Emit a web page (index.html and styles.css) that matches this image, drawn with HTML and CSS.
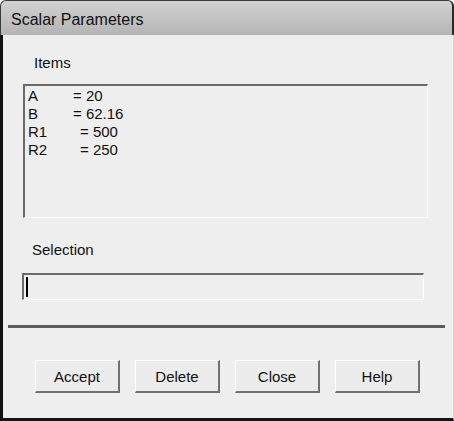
FILE: index.html
```html
<!DOCTYPE html>
<html lang="en">
<head>
	<meta charset="UTF-8">
	<meta name="viewport" content="width=device-width, initial-scale=1.0">
	<title>Scalar Parameters</title>
	<link rel="stylesheet" href="styles.css">
</head>
<body>

<div class="dialog">
	<div class="titlebar">Scalar Parameters</div>
	<div class="client">
		<div class="label items-label">Items</div>
		<div class="listbox">
			<div class="row"><span class="key">A</span>= 20</div>
			<div class="row"><span class="key">B</span>= 62.16</div>
			<div class="row"><span class="key wide">R1</span>= 500</div>
			<div class="row"><span class="key wide">R2</span>= 250</div>
		</div>
		<div class="label sel-label">Selection</div>
		<div class="textbox"><span class="caret"></span></div>
		<div class="separator"></div>
		<div class="buttons">
			<button>Accept</button>
			<button>Delete</button>
			<button>Close</button>
			<button>Help</button>
		</div>
	</div>
</div>

</body>
</html>
```

FILE: styles.css
```css
body {
	margin: 0;
	background: #ffffff;
	font-family: "Liberation Sans", Arial, sans-serif;
	color: #111;
}
.dialog {
	width: 454px;
	height: 421px;
	display: flex;
	flex-direction: column;
}
.titlebar {
	height: 35px;
	box-sizing: border-box;
	padding-left: 10px;
	line-height: 38px;
	font-size: 16px;
	background: linear-gradient(#d2d2d2, #b4b4b4);
	border: 1px solid #3a3a3a;
	border-bottom: none;
	border-right: 2px solid #2a2a2a;
	border-radius: 6px 6px 0 0;
}
.client {
	flex: 1;
	display: flex;
	flex-direction: column;
	background: #eeeeee;
	border-left: 3px solid #111;
	border-bottom: 3px solid #151515;
	border-right: 1px solid #d4d4d4;
	padding-top: 19px;
	font-size: 15px;
}
.label {
	line-height: 17px;
	height: 17px;
}
.items-label {
	margin-left: 31px;
}
.listbox {
	margin: 13px 0 0 20px;
	width: 405px;
	height: 134px;
	box-sizing: border-box;
	border-top: 2px solid #6a6a6a;
	border-left: 2px solid #6a6a6a;
	border-right: 1px solid #ffffff;
	border-bottom: 1px solid #ffffff;
	padding: 1px 0 0 3px;
	background: #eeeeee;
}
.row {
	line-height: 18px;
	height: 18px;
}
.key {
	display: inline-block;
	width: 45px;
}
.key.wide {
	width: 52px;
}
.sel-label {
	margin: 23px 0 0 29px;
}
.textbox {
	margin: 15px 0 0 19px;
	width: 402px;
	height: 27px;
	box-sizing: border-box;
	border-top: 2px solid #6a6a6a;
	border-left: 2px solid #6a6a6a;
	border-right: 1px solid #ffffff;
	border-bottom: 1px solid #ffffff;
	padding: 2px 0 0 2px;
}
.caret {
	display: block;
	width: 2px;
	height: 20px;
	background: #000;
}
.separator {
	margin: 25px 0 0 5px;
	width: 437px;
	height: 3px;
	background: #5c5c5c;
}
.buttons {
	display: flex;
	gap: 15px;
	margin: 32px 0 0 32px;
}
button {
	width: 85px;
	height: 33px;
	box-sizing: border-box;
	padding: 0;
	font-family: "Liberation Sans", Arial, sans-serif;
	font-size: 15px;
	color: #111;
	background: #ececec;
	border-top: 1px solid #ffffff;
	border-left: 1px solid #ffffff;
	border-right: 2px solid #707070;
	border-bottom: 2px solid #707070;
	border-radius: 0;
}
```
